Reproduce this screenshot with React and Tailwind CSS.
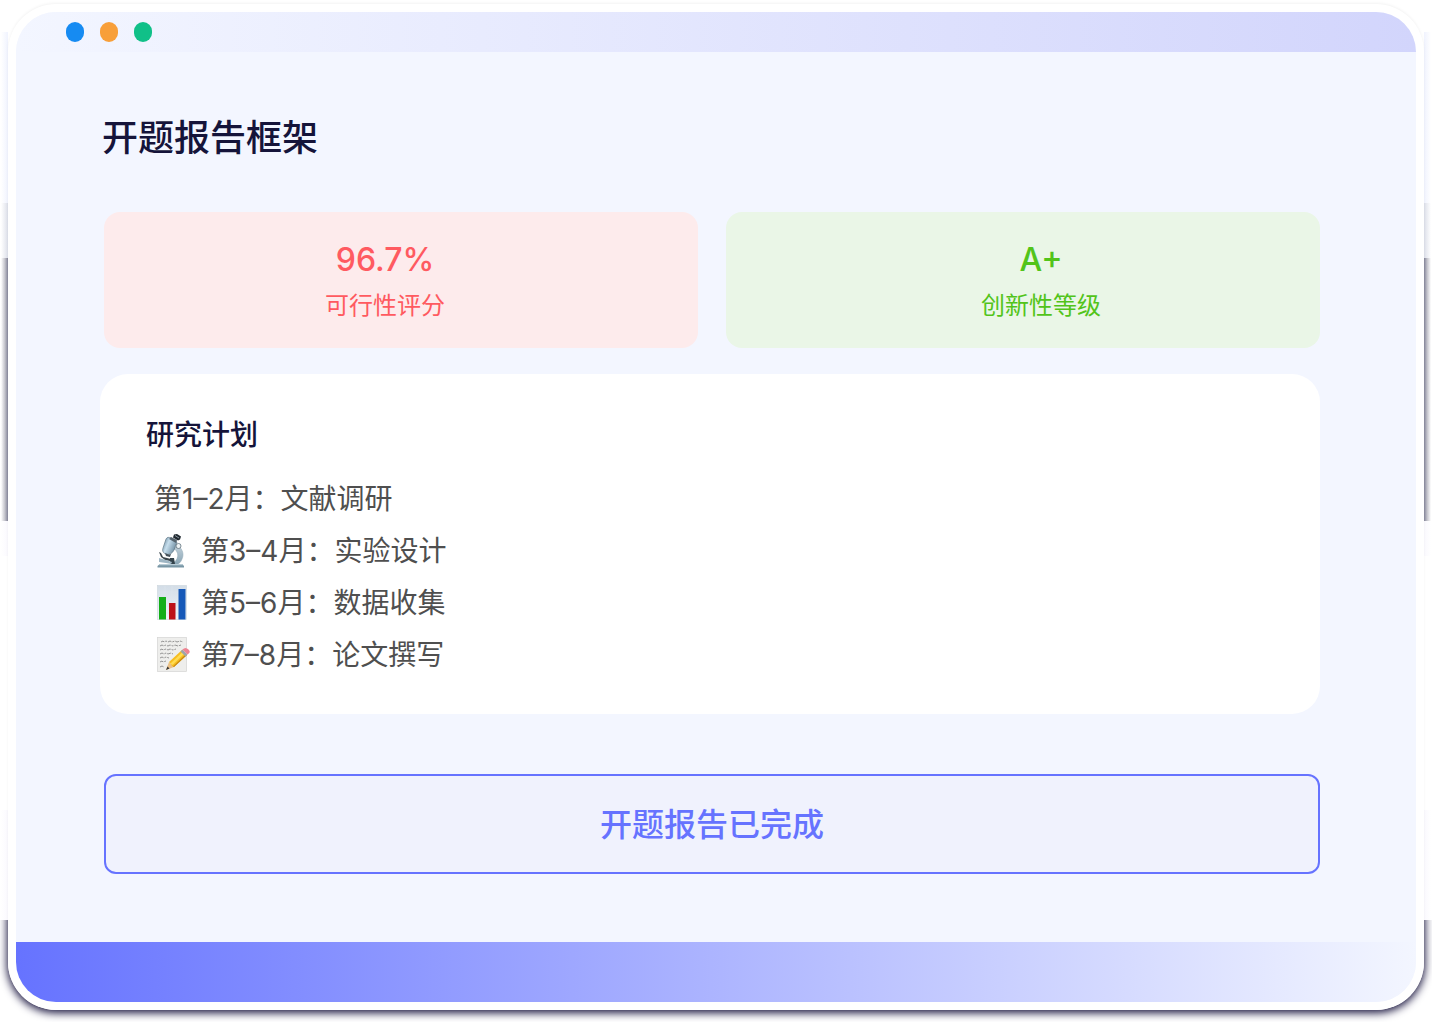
const edgeBands = [
  { h: "h-[32px]", bg: "bg-transparent" },
  { h: "h-[171px]", bg: "bg-linear-to-l/srgb from-[#f0f3fe] to-white" },
  { h: "h-[55px]", bg: "bg-linear-to-l/srgb from-[#dcdfe9] to-white" },
  { h: "h-[263px]", bg: "bg-linear-to-l/srgb from-[#85869a] via-[#c9c9d0] to-white" },
  { h: "h-[35px]", bg: "bg-linear-to-l/srgb from-[#faf9fe] to-white" },
  { h: "h-[254px]", bg: "bg-transparent" },
  { h: "h-[110px]", bg: "bg-linear-to-l/srgb from-[#faf9fe] to-white" },
];

function EdgeShade({ className }) {
  return (
    <div aria-hidden="true" className={`absolute top-0 flex w-[7px] flex-col ${className}`}>
      {edgeBands.map((band, i) => (
        <div key={i} className={`${band.h} ${band.bg}`} />
      ))}
    </div>
  );
}

function Microscope() {
  return (
    <svg viewBox="0 0 32 36" className="h-9 w-8" aria-hidden="true">
      <defs>
        <linearGradient id="tube" x1="0" y1="0" x2="1" y2="0.5">
          <stop offset="0" stopColor="#57778c" />
          <stop offset="0.45" stopColor="#c7dfee" />
          <stop offset="1" stopColor="#6f8da1" />
        </linearGradient>
        <linearGradient id="stand" x1="0" y1="0" x2="0" y2="1">
          <stop offset="0" stopColor="#c0d0da" />
          <stop offset="1" stopColor="#87a3b3" />
        </linearGradient>
      </defs>
      <path d="M22 13c5 3 6 9 4 13-1 3-3 5-6 6l-4-1c5-3 7-8 5-12-1-2-2-3-4-3z" fill="url(#stand)" stroke="#86a0af" strokeWidth="0.5" />
      <path d="M4 31h22l2 2v1.500H1.500V33z" fill="#7896a5" />
      <path d="M4 31h22l1 1.300H3z" fill="#b8ccd6" />
      <path d="M14 25h4l1 6h-5z" fill="#34434c" />
      <path d="M3 19l2 1 2 4 4 1 4 1-1 2-5-1-4-3z" fill="#39444a" />
      <path d="M3 25l7 2 6 2-1 2-5-1-7-1z" fill="#9fb6c4" />
      <path d="M10 6c1-2 3-2 5-1l6 4-3 8c-2 4-5 5-8 4s-4-3-3-6z" fill="url(#tube)" stroke="#526b7b" strokeWidth="0.6" />
      <path d="M9 20c2 1 4 2 6 1l-1 3-4-1z" fill="#44515a" />
      <path d="M15 4l6 3-1 3-7-4z" fill="#56646e" />
      <path d="M18 1.500l3-0.500 4 2.500-1 3-2 1-5-3z" fill="#222a31" />
      <path d="M19 2.500l4 2.500" stroke="#a8b6bf" strokeWidth="0.8" />
      <circle cx="22.500" cy="13" r="2.500" fill="#edf3f5" stroke="#60717c" strokeWidth="0.8" />
    </svg>
  );
}

function BarChart() {
  return (
    <svg viewBox="0 0 32 36" className="h-9 w-8" aria-hidden="true">
      <defs>
        <linearGradient id="sheet" x1="0" y1="0" x2="0" y2="1">
          <stop offset="0" stopColor="#d3dde7" />
          <stop offset="1" stopColor="#eff4f9" />
        </linearGradient>
      </defs>
      <rect x="1.500" y="0.500" width="29" height="34" fill="url(#sheet)" stroke="#cbd5dd" strokeWidth="0.6" />
      <path d="M2 7h28M2 14h28M2 21h28M2 28h28M9 1v33M16 1v33M23 1v33" stroke="#dde6ee" strokeWidth="0.5" />
      <rect x="3" y="12" width="7" height="22.500" fill="#13ae18" />
      <rect x="13" y="18" width="6.500" height="16.500" fill="#bd1118" />
      <rect x="22.500" y="4" width="7" height="30.500" fill="#1558b8" />
    </svg>
  );
}

function Memo() {
  return (
    <svg viewBox="0 0 34 36" className="h-9 w-[34px]" aria-hidden="true">
      <rect x="1.500" y="0.500" width="29" height="34" fill="#eeeeec" stroke="#d5d5d3" strokeWidth="0.7" />
      <g fill="none" stroke="#8a8a8a" strokeWidth="0.9" strokeDasharray="4 1 2 1">
        <path d="M5 5l2-1 1 1 2-1 2 1 2-1 2 1 3-1 2 1 3-1 3 1" />
        <path d="M4 9l2-1 2 1 1-1 3 1 2-1 3 1 2-1 3 1 3-1" />
        <path d="M4 13l2-1 1 1 3-1 2 1 2-1 3 1 3-1" />
        <path d="M4 17l2-1 2 1 2-1 2 1 3-1 2 1" />
        <path d="M4 21l2-1 2 1 2-1 3 1" />
        <path d="M4 25l2-1 1 1 3-1" />
        <path d="M4 30l2-1 2 1" />
      </g>
      <path d="M10 33l3-8 5 5z" fill="#e9bf86" />
      <path d="M10 33l1.500-3.500 2 2z" fill="#333" />
      <path d="M13 25L26 13l5 5-13 12-2-1-1-2z" fill="#f6bd20" />
      <path d="M14.500 26.500L27 14.500l2 1.500-12.500 12z" fill="#ffdc52" />
      <path d="M17 29.500L30 17l1 1-13 12z" fill="#c98812" />
      <path d="M24.500 14.500l2-2 5 5-2 2z" fill="#9da5aa" />
      <path d="M26.500 12.500c2-2 4-2 6 0s1.500 3-1 5z" fill="#ee8492" />
    </svg>
  );
}

const plan = [
  { text: "第1–2月：文献调研" },
  { text: "第3–4月：实验设计", Icon: Microscope },
  { text: "第5–6月：数据收集", Icon: BarChart },
  { text: "第7–8月：论文撰写", Icon: Memo },
];

export default function App() {
  return (
    <div className="relative min-h-screen bg-white px-2 pt-1 pb-3 font-['Inter','Noto_Sans_CJK_SC',sans-serif]">
      <EdgeShade className="left-px" />
      <EdgeShade className="right-px -scale-x-100" />
      <div aria-hidden="true" className="absolute inset-x-0 bottom-0 h-[102px] overflow-hidden">
        <div className="absolute inset-x-2 bottom-3 h-52 rounded-[48px] shadow-[0_2px_8px_1px_#1b1740]" />
      </div>

      <div className="relative flex min-h-[calc(100vh-16px)] flex-col rounded-[48px] bg-white p-2 shadow-[0_-1px_3px_rgba(0,0,0,0.05)]">
        <div className="flex grow flex-col overflow-hidden rounded-[40px] bg-[#f3f6ff]">
          <header className="flex h-10 items-center gap-4 bg-linear-to-r/srgb from-[#f3f6ff] to-[#d2d5fc] pl-[50px]">
            <span className="h-5 w-[18px] rounded-full bg-[#168bf2]" />
            <span className="h-5 w-[18px] rounded-full bg-[#f89f39]" />
            <span className="h-5 w-[18px] rounded-full bg-[#10c088]" />
          </header>

          <main className="grow pt-[60px] pr-24 pl-[88px]">
            <h1 className="-ml-0.5 text-4xl leading-[52px] font-medium text-[#15143a]">开题报告框架</h1>

            <div className="mt-12 grid grid-cols-2 gap-7">
              <section className="flex h-[136px] flex-col items-center rounded-2xl bg-[#fdebec] pt-[25px] pr-8 text-[#ff5a60]">
                <p className="text-[32px] leading-[46px] font-medium">96.7%</p>
                <p className="text-2xl leading-[46px]">可行性评分</p>
              </section>
              <section className="flex h-[136px] flex-col items-center rounded-2xl bg-[#eaf6e7] pt-[25px] pl-9 text-[#52c41a]">
                <p className="text-[32px] leading-[46px] font-medium">A+</p>
                <p className="text-2xl leading-[46px]">创新性等级</p>
              </section>
            </div>

            <section className="mt-[26px] -ml-1 rounded-[28px] bg-white px-[46px] pt-[41px] pb-[33px]">
              <h2 className="text-[28px] leading-10 font-medium text-[#15143a]">研究计划</h2>
              <ul className="mt-[18px] pl-2 text-[28px] leading-[52px] text-[#4f4f4f]">
                {plan.map(({ text, Icon }) => (
                  <li key={text} className="flex items-center">
                    {Icon && (
                      <span className="w-[47px] shrink-0 pl-0.5">
                        <Icon />
                      </span>
                    )}
                    {text}
                  </li>
                ))}
              </ul>
            </section>

            <button
              type="button"
              className="mt-[60px] mb-[68px] h-[100px] w-full rounded-xl border-2 border-[#6673ff] bg-[#f0f2fd] pt-0.5 text-[32px] font-medium text-[#6673ff]"
            >
              开题报告已完成
            </button>
          </main>

          <footer className="h-[60px] bg-linear-to-r/srgb from-[#6673ff] to-[#f3f6ff]" />
        </div>
      </div>
    </div>
  );
}
